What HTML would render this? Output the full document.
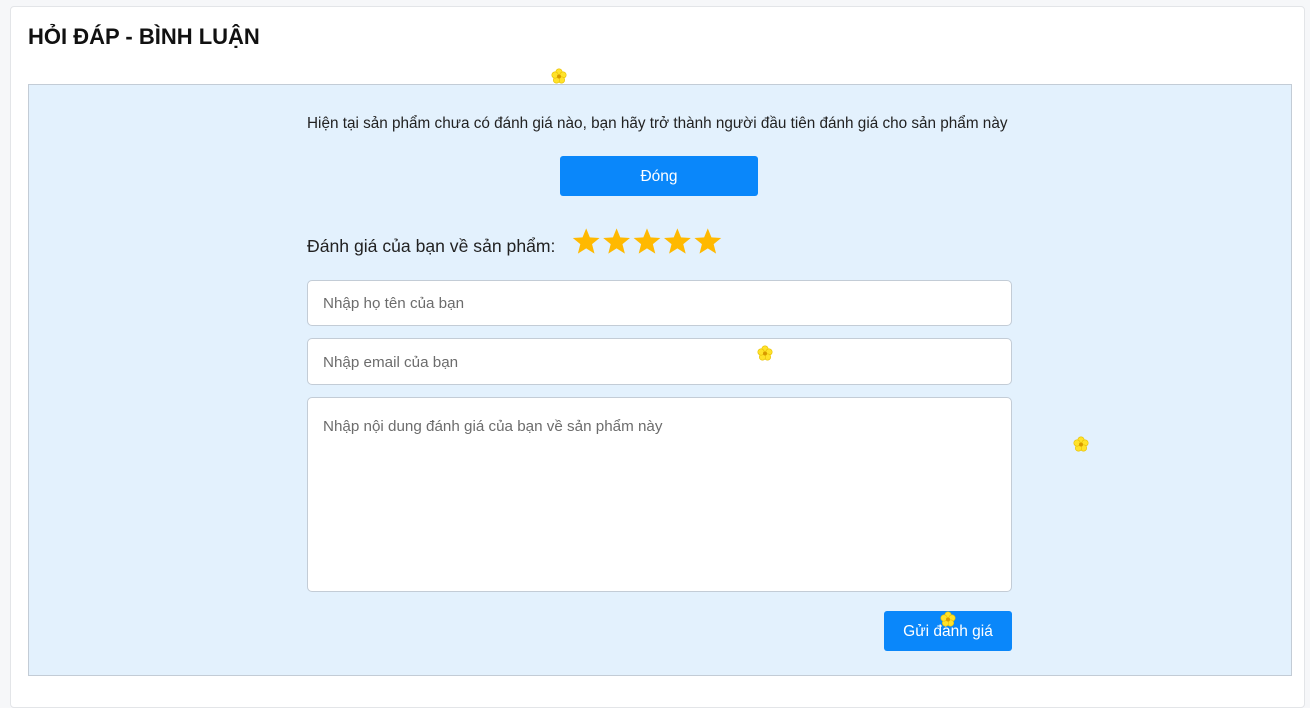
<!DOCTYPE html>
<html><head><meta charset="utf-8"><style>
body{margin:0;background:#f6f7f9;font-family:"Liberation Sans",Arial,sans-serif;width:1310px;height:689px;overflow:hidden;position:relative}
.card{position:absolute;left:10px;top:6px;width:1293px;height:700px;background:#fff;border:1px solid #e3e5e8;border-radius:4px}
h2{position:absolute;left:28px;top:24px;margin:0;font-size:22px;font-weight:bold;color:#111}
.box{position:absolute;left:28px;top:84px;width:1262px;height:590px;background:#e3f1fd;border:1px solid #c3ccd6}
.msg{position:absolute;left:307px;top:115px;font-size:15.3px;color:#222;white-space:nowrap}
.btn{position:absolute;background:#0a87fa;color:#fff;border-radius:3px;text-align:center;font-size:15.5px}
.lbl{position:absolute;left:307px;top:236px;font-size:17.6px;color:#222}
.inp{position:absolute;left:307px;width:705px;background:#fff;border:1px solid #c3ccd6;border-radius:5px;font-size:15.2px;color:#6c6c6c;box-sizing:border-box;padding-left:15px}
.fl{position:absolute;width:16px;height:16px}
</style></head><body>
<div class="card"></div>
<h2>HỎI ĐÁP - BÌNH LUẬN</h2>
<div class="box"></div>
<div class="msg">Hiện tại sản phẩm chưa có đánh giá nào, bạn hãy trở thành người đầu tiên đánh giá cho sản phẩm này</div>
<div class="btn" style="left:560px;top:156px;width:198px;height:40px;line-height:42px">Đóng</div>
<div class="lbl">Đánh giá của bạn về sản phẩm:</div>
<svg style="position:absolute;left:572px;top:227px" width="152" height="30" viewBox="0 0 150 28">
<g fill="#ffb900">
<path id="s" d="M14 0.5 L17.6 9.4 L27.2 10 L19.8 16.1 L22.2 25.5 L14 20.3 L5.8 25.5 L8.2 16.1 L0.8 10 L10.4 9.4Z"/>
<use href="#s" x="30"/><use href="#s" x="60"/><use href="#s" x="90"/><use href="#s" x="120"/>
</g></svg>
<div class="inp" style="top:280px;height:46px;line-height:46px">Nhập họ tên của bạn</div>
<div class="inp" style="top:338px;height:47px;line-height:47px">Nhập email của bạn</div>
<div class="inp" style="top:397px;height:195px;padding-top:20px">Nhập nội dung đánh giá của bạn về sản phẩm này</div>
<div class="btn" style="left:884px;top:611px;width:128px;height:40px;line-height:42px">Gửi đánh giá</div>
<svg width="0" height="0" style="position:absolute"><defs><g id="f"><g fill="#ffe22a" stroke="#e8c000" stroke-width=".6"><circle cx="8" cy="4" r="3.2"/><circle cx="12" cy="7" r="3.2"/><circle cx="10.5" cy="12" r="3.2"/><circle cx="5.5" cy="12" r="3.2"/><circle cx="4" cy="7" r="3.2"/></g><circle cx="8" cy="8.5" r="2" fill="#d89a00"/></g></defs></svg>
<svg class="fl" style="left:551px;top:68px" viewBox="0 0 16 16"><use href="#f"/></svg>
<svg class="fl" style="left:757px;top:345px" viewBox="0 0 16 16"><use href="#f"/></svg>
<svg class="fl" style="left:1073px;top:436px" viewBox="0 0 16 16"><use href="#f"/></svg>
<svg class="fl" style="left:940px;top:611px" viewBox="0 0 16 16"><use href="#f"/></svg>
</body></html>
